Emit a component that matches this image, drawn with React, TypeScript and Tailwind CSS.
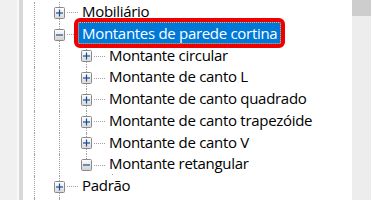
import React from "react";

const LINE = "border-[#a0a0a0] border-dotted";

function ExpBox({ open }: { open: boolean }) {
  return (
    <svg width="11" height="12" viewBox="0 0 11 12" className="block shrink-0">
      <defs>
        <linearGradient id={open ? "gm" : "gp"} x1="0" y1="0" x2="0" y2="1">
          <stop offset="0" stopColor="#ffffff" />
          <stop offset="1" stopColor={open ? "#cfcfcf" : "#d8d8d8"} />
        </linearGradient>
      </defs>
      <rect x="0.5" y="0.5" width="10" height="11" rx="1" fill={`url(#${open ? "gm" : "gp"})`} stroke="#8a8a8a" />
      <line x1="2" y1="6" x2="9" y2="6" stroke="#1a4c96" strokeWidth="1.2" />
      {!open && <line x1="5.5" y1="2.5" x2="5.5" y2="9.5" stroke="#1a4c96" strokeWidth="1.2" />}
    </svg>
  );
}

function Indent() {
  return (
    <div className="w-[27px] shrink-0 self-stretch">
      <div className={`ml-[12px] h-full border-l ${LINE}`} />
    </div>
  );
}

function Connector({ open, top, bottom }: { open: boolean; top: boolean; bottom: boolean }) {
  return (
    <div className="flex w-[31px] shrink-0 self-stretch pl-[7px]">
      <div className="flex w-[11px] flex-col">
        <div className={`ml-[5px] flex-1 ${top ? `border-l ${LINE}` : ""}`} />
        <ExpBox open={open} />
        <div className={`ml-[5px] flex-1 ${bottom ? `border-l ${LINE}` : ""}`} />
      </div>
      <div className="flex flex-1 items-center">
        <div className={`ml-[2px] w-full border-t ${LINE}`} />
      </div>
    </div>
  );
}

type Item = {
  label: string;
  level: 1 | 2;
  open?: boolean;
  top: boolean;
  bottom: boolean;
  selected?: boolean;
  dot?: boolean;
};

const items: Item[] = [
  { label: "Mobiliário", level: 1, top: true, bottom: true },
  { label: "Montantes de parede cortina", level: 1, open: true, top: true, bottom: true, selected: true },
  { label: "Montante circular", level: 2, top: true, bottom: true },
  { label: "Montante de canto L", level: 2, top: true, bottom: true },
  { label: "Montante de canto quadrado", level: 2, top: true, bottom: true },
  { label: "Montante de canto trapezóide", level: 2, top: true, bottom: true },
  { label: "Montante de canto V", level: 2, top: true, bottom: true },
  { label: "Montante retangular", level: 2, open: true, top: true, bottom: false, dot: true },
  { label: "Padrão", level: 1, top: true, bottom: true },
];

function Row({ it }: { it: Item }) {
  return (
    <div className="flex h-[21.75px] shrink-0">
      <div className="w-[24px] shrink-0 self-stretch">
        <div className={`ml-[11px] h-full border-l ${LINE}`} />
      </div>
      {it.level === 2 && <Indent />}
      <Connector open={!!it.open} top={it.top} bottom={it.bottom} />
      <div className="relative flex self-stretch">
        <div
          className={
            it.selected
              ? "-mt-[2px] h-[22px] whitespace-nowrap rounded-[2px] border border-dotted border-[#f3b46a] bg-[#0078d7] px-[3px] text-[15px] leading-[20px] tracking-[-0.3px] text-white outline-[4px] outline-solid outline-[#ee0000] outline-offset-0"
              : "-mt-[2px] h-[22px] whitespace-nowrap border border-transparent px-[3px] text-[15px] leading-[20px] tracking-[-0.3px] text-black"
          }
        >
          {it.label}
        </div>
        {it.dot && <div className="absolute bottom-[1px] left-[7px] h-[1px] w-[1px] bg-[#a0a0a0]" />}
      </div>
    </div>
  );
}

export default function App() {
  return (
    <div className="flex h-[200px] w-[372px] overflow-hidden bg-white font-['Open_Sans',sans-serif]">
      <div className="w-[17px] shrink-0 bg-[#f0f0f0]" />
      <div className="w-[2px] shrink-0 bg-[#f8f8f8]" />
      <div className="w-[4px] shrink-0 bg-[#d8d8d8]" />
      <div className="flex min-w-0 flex-1 flex-col pt-[2px]">
        {items.map((it) => (
          <Row key={it.label} it={it} />
        ))}
        <div className="flex flex-1">
          <div className="w-[24px] shrink-0">
            <div className={`ml-[11px] h-full border-l ${LINE}`} />
          </div>
          <Indent />
        </div>
      </div>
      <div className="flex w-[19px] shrink-0 flex-col bg-[#ededed]">
        <div className="h-[16px] bg-[#cdcdcd]" />
      </div>
      <div className="w-[1px] shrink-0 bg-white" />
    </div>
  );
}
